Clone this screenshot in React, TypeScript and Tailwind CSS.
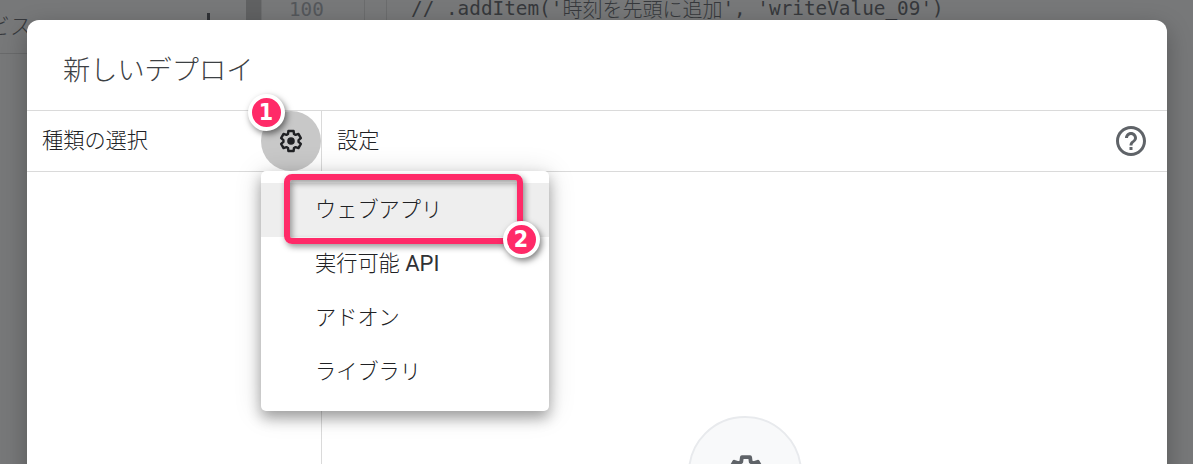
import { MdHelpOutline } from 'react-icons/md';

const items = [
  { label: 'ウェブアプリ', active: true },
  { label: '実行可能 API', active: false },
  { label: 'アドオン', active: false },
  { label: 'ライブラリ', active: false },
];

function Gear({ className }: { className: string }) {
  return (
    <svg viewBox="-12 -12 24 24" className={className} fill="none" stroke="currentColor" strokeWidth="2.4" strokeLinejoin="round">
      <path d="M-2.6-10H2.6L3-7L4.56-6.1L7.46-7.08L9.86-2.92L7.56-.9V.9L9.86 2.92L7.46 7.08L4.56 6.1L3 7L2.6 10H-2.6L-3 7L-4.56 6.1L-7.46 7.08L-9.86 2.92L-7.56.9V-.9L-9.86-2.92L-7.46-7.08L-4.56-6.1L-3-7Z" />
      <circle r="3.8" fill="currentColor" stroke="none" />
    </svg>
  );
}

function Badge({ n, className }: { n: number; className: string }) {
  return (
    <div
      className={`absolute flex size-[37px] items-center justify-center rounded-full border-4 border-white bg-[#ff2a68] font-['DejaVu_Sans',sans-serif] text-[23px] font-bold leading-none text-white shadow-[2px_3px_6px_rgba(0,0,0,0.5)] ${className}`}
    >
      <span className="scale-x-90">{n}</span>
    </div>
  );
}

function Backdrop() {
  return (
    <div className="flex h-[464px] bg-[#777879] text-[#36383c]">
      <div className="h-[54px] w-[246px] shrink-0 overflow-hidden border-b border-[#696a6b]">
        <div className="flex justify-between pt-[9px]">
          <span className="-ml-[12px] text-[22px] font-light leading-[30px]">ビス</span>
          <span className="mr-[36px] mt-[4px] h-[14px] w-[3px] bg-[#303236]" />
        </div>
      </div>
      <div className="w-[16px] shrink-0 border-r border-[#6d6e6f] bg-[#606162]" />
      <div className="h-full w-[103px] shrink-0 border-r border-[#6b6c6d] pl-[27px] font-['DejaVu_Sans_Mono',monospace] text-[19.3px] leading-[20px] text-[#54575b]">
        100
      </div>
      <div className="h-full w-[22px] shrink-0 border-r border-[#6b6c6d]" />
      <div className="flex whitespace-pre pl-[24px] font-['DejaVu_Sans_Mono',monospace] text-[19.35px] leading-[18px]">
        <span>{"// .addItem('"}</span>
        <span className="font-['Noto_Sans_CJK_JP',sans-serif] text-[20px] font-light">時刻を先頭に追加</span>
        <span>{"', 'writeValue_09')"}</span>
      </div>
    </div>
  );
}

function TypeMenu() {
  return (
    <div className="absolute left-[234px] top-[151px] h-[240px] w-[288px] rounded-[5px] bg-white pt-[12px] shadow-[0_7px_14px_rgba(0,0,0,0.32),0_2px_28px_rgba(0,0,0,0.15)]">
      {items.map((item) => (
        <div
          key={item.label}
          className={`flex h-[54px] items-center pb-[5px] pl-[54px] text-[21.2px] font-light ${item.active ? 'bg-[#eeeeee]' : ''}`}
        >
          {item.label.endsWith(' API') ? (
            <span className="pt-[2px]">
              {item.label.slice(0, -4)}
              <span className="font-['Roboto',sans-serif] text-[22px] font-normal text-[#303134]"> API</span>
            </span>
          ) : (
            item.label
          )}
        </div>
      ))}
      <div className="absolute left-[23px] top-[3px] h-[70px] w-[239px] rounded-[8px] border-[6px] border-[#ff2a68] shadow-[2px_3px_6px_rgba(0,0,0,0.4),inset_2px_3px_6px_rgba(0,0,0,0.4)]" />
      <Badge n={2} className="left-[242px] top-[50px]" />
    </div>
  );
}

export default function App() {
  return (
    <div className="relative h-[464px] w-[1193px] overflow-hidden font-['Noto_Sans_CJK_JP',sans-serif] text-[#202124]">
      <Backdrop />
      <div className="absolute left-[27px] top-[20px] flex h-[520px] w-[1140px] flex-col rounded-[12px] bg-white shadow-[0_8px_24px_rgba(0,0,0,0.28)]">
        <header className="flex h-[91px] shrink-0 items-center border-b border-[#dadada] pb-[4px] pl-[36px] pt-[10px] text-[27.2px] font-light text-[#3c4043]">
          新しいデプロイ
        </header>
        <div className="flex h-[61px] shrink-0 border-b border-[#dadada] text-[21.2px] font-light">
          <div className="flex w-[295px] items-center justify-between border-r border-[#dadada] pl-[15px]">
            <span className="pb-[5px]">種類の選択</span>
            <div className="flex size-[60px] items-center justify-center rounded-full bg-[#c8c8c8]">
              <Gear className="size-6" />
            </div>
          </div>
          <div className="flex flex-1 items-center justify-between pl-[15px] pr-[18px]">
            <span className="pb-[5px]">設定</span>
            <MdHelpOutline className="size-[36px] text-[#5f6368]" />
          </div>
        </div>
        <div className="flex flex-1">
          <div className="w-[295px] border-r border-[#dadada]" />
          <div className="flex flex-1 justify-center pt-[244px]">
            <div className="flex size-[114px] items-center justify-center rounded-full border-2 border-[#e8eaed] bg-[#f8f9fa] pl-[2px]">
              <Gear className="size-[38px] text-[#5f6368]" />
            </div>
          </div>
        </div>
        <Badge n={1} className="left-[221px] top-[74px]" />
        <TypeMenu />
      </div>
    </div>
  );
}
